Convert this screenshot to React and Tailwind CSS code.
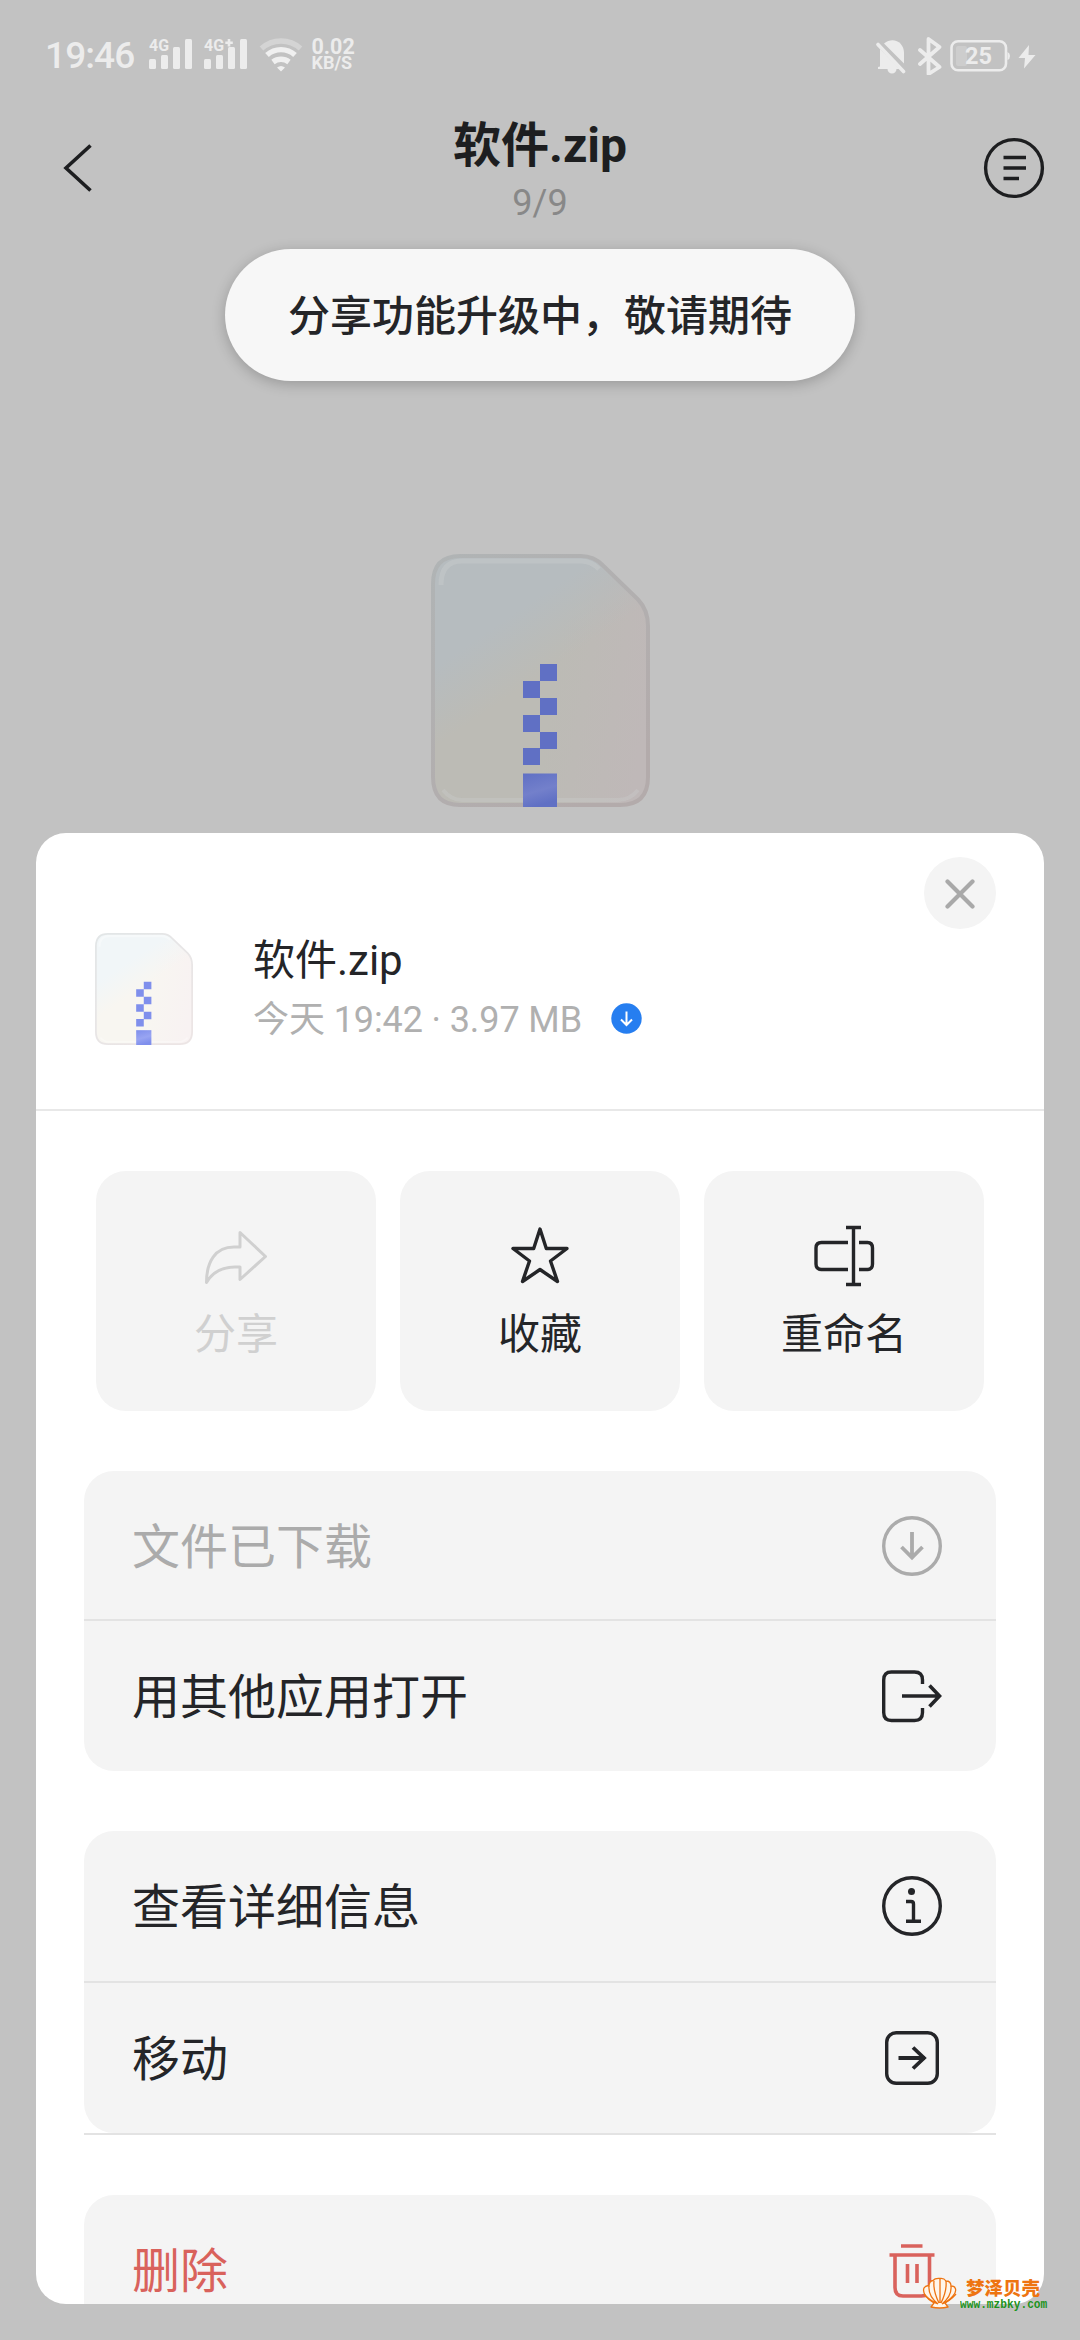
import React from 'react';
import clsx from 'clsx';

const SignalIcon = ({ label, plus }) => (
  <svg className="-mt-[10px]" width="44" height="42" viewBox="0 -10 44 42" fill="#ececec">
    <text x="0" y="13.4" fontSize="17" fontWeight="700" fontFamily="Roboto" textLength="20" lengthAdjust="spacingAndGlyphs">
      {label}
    </text>
    {plus && <path d="M25 1v7.500M21.300 4.700h7.500" stroke="#ececec" strokeWidth="2.600" />}
    <rect x="0" y="21" width="7" height="10" rx="1.5" />
    <rect x="12" y="17" width="7" height="14" rx="1.5" />
    <rect x="24" y="9" width="7" height="22" rx="1.5" />
    <rect x="36" y="1" width="7" height="30" rx="1.5" />
  </svg>
);

const WifiIcon = () => (
  <svg width="44" height="34" viewBox="0 0 44 34" fill="none" strokeWidth="5.4">
    <path d="M2.5 10.5a29 29 0 0 1 39 0" stroke="#d4d4d4" />
    <path d="M8 17a21 21 0 0 1 28 0" stroke="#f0f0f0" />
    <path d="M14 24a13 13 0 0 1 16 0" stroke="#f0f0f0" />
    <path d="M18 29.5q4-3 8 0l-4 4z" fill="#f0f0f0" />
  </svg>
);

const StatusBar = () => (
  <div className="flex h-[108px] items-start pl-[45px] pr-[44px] pt-[37px] text-[#ececec]">
    <span className="w-[104px] text-[37px] font-medium leading-[37px] tracking-[-0.9px]">19:46</span>
    <div className="flex pt-[1px]">
      <SignalIcon label="4G" />
      <div className="ml-[11px]">
        <SignalIcon label="4G" plus />
      </div>
      <div className="ml-[10.5px]">
        <WifiIcon />
      </div>
    </div>
    <div className="ml-[9px] flex flex-col pt-[1px] font-bold">
      <span className="text-[21.5px] leading-[17px]">0.02</span>
      <span className="text-[18px] leading-[16px]">KB/S</span>
    </div>
    <div className="ml-auto flex">
      <svg width="160" height="38" viewBox="876 35 160 38" fill="#ececec">
        <path d="M884 41.5C893 34 904 40 904 51v10.500z" />
        <path d="M880 47v17.500l-2 .5v2h9.500a4.500 4.500 0 0 0 9 0h3z" />
        <path d="M878 42.500 903.500 69.500" stroke="#ececec" strokeWidth="3.600" strokeLinecap="round" />
        <path d="M920 48l19.500 17-11 7V37l11 8L920 62" fill="none" stroke="#ececec" strokeWidth="3.800" strokeLinejoin="round" strokeLinecap="round" />
        <rect x="951.500" y="39.300" width="54.500" height="29" rx="6.500" fill="none" stroke="#ececec" strokeWidth="2.600" />
        <path d="M1007.500 50q2.500 1 2.500 4t-2.500 4z" />
        <rect x="956" y="44" width="11" height="20" rx="2" fill="#cdcdcd" />
        <text x="978.500" y="62" fontSize="23.500" fontWeight="700" fontFamily="Roboto" textAnchor="middle">
          25
        </text>
        <path d="M1029 43 1018.500 56h6.500l-1 10.500L1035.500 53h-7z" />
      </svg>
    </div>
  </div>
);

const Header = () => (
  <div className="flex h-[141px] items-start justify-between px-[35px] text-[#1d1e20]">
    <svg className="mt-[36px]" width="62" height="48" viewBox="-27 0 62 48" fill="none" stroke="currentColor" strokeWidth="3.6">
      <path d="M28.500 1.500 4 24l24.500 22.500" />
    </svg>
    <div className="flex flex-col items-center">
      <h1 className="mt-[10px] text-[48px] font-bold leading-[56px]">软件.zip</h1>
      <span className="mt-[8px] text-[36px] leading-[42px] text-[#888888]">9/9</span>
    </div>
    <svg className="mt-[29px]" width="62" height="62" viewBox="0 0 62 62" fill="none" stroke="currentColor" strokeWidth="3.4">
      <circle cx="31" cy="31" r="28.400" />
      <path d="M20.500 20.500H43M20.500 31H43M20.500 41.500H36" />
    </svg>
  </div>
);

const OUTLINE =
  'M29 2H150Q163 2 172 11.500L207 45.500Q217 56 217 72V223Q217 251 189 251H29Q2 251 2 223V30Q2 2 29 2z';

const ZipFile = ({ id, width, height, colors, edges, blocks, shine }) => (
  <svg width={width} height={height} viewBox="0 0 219 253" preserveAspectRatio="none">
    <defs>
      <linearGradient id={id + 'Base'} x1="0.2" y1="0.45" x2="1" y2="0.6">
        <stop offset="0" stopColor={colors[1]} />
        <stop offset="0.45" stopColor={colors[1]} />
        <stop offset="1" stopColor={colors[2]} />
      </linearGradient>
      <linearGradient id={id + 'Tint'} x1="0.15" y1="0" x2="0.5" y2="0.6">
        <stop offset="0" stopColor={colors[0]} />
        <stop offset="0.45" stopColor={colors[0]} />
        <stop offset="0.85" stopColor={colors[0]} stopOpacity="0" />
      </linearGradient>
      <linearGradient id={id + 'Edge'} x1="0" y1="0" x2="0.7" y2="1">
        <stop offset="0" stopColor={edges[0]} />
        <stop offset="1" stopColor={edges[1]} />
      </linearGradient>
      <linearGradient id={id + 'Block'} x1="0" y1="0" x2="0.3" y2="1">
        <stop offset="0" stopColor={blocks[0]} />
        <stop offset="0.6" stopColor={blocks[1]} />
        <stop offset="1" stopColor={blocks[0]} />
      </linearGradient>
    </defs>
    <path d={OUTLINE} fill={`url(#${id}Base)`} />
    <path d={OUTLINE} fill={`url(#${id}Tint)`} />
    <path d="M10 31Q10 7 31 7H150Q160 7 168 15" fill="none" stroke={shine} strokeWidth="5" opacity="0.35" />
    <path d="M12 236Q20 246 31 246H187Q199 246 207 236" fill="none" stroke={shine} strokeWidth="4" opacity="0.3" />
    <path d={OUTLINE} fill="none" stroke={`url(#${id}Edge)`} strokeWidth="4" />
    <g fill={blocks[0]}>
      <path d="M109 110h17v17h-17zM92 127h17v17H92zM109 144h17v17h-17zM92 161h17v17H92zM109 178h17v17h-17zM92 194h17v17H92z" />
      <path d="M92 219.500h34V253H92z" fill={`url(#${id}Block)`} />
    </g>
  </svg>
);

const ShareIcon = () => (
  <svg width="64" height="64" viewBox="0 0 64 64" fill="none" stroke="currentColor" strokeWidth="3" strokeLinejoin="round">
    <path d="M36 8.500 61.500 32.500 36 55.500V43H31C18 43 8 49 2.500 58.500 2.500 38 11 23 30 23h6z" />
  </svg>
);

const StarIcon = () => (
  <svg width="64" height="64" viewBox="0 0 64 64" fill="none" stroke="currentColor" strokeWidth="3.400" strokeLinejoin="round">
    <path d="M32 5 38.300 24.500H59L42.500 37 49.500 57.500 32 45.500 14.500 57.500 21.500 37 5 24.500H25.700z" />
  </svg>
);

const RenameIcon = () => (
  <svg width="64" height="64" viewBox="0 0 64 64" fill="none" stroke="currentColor" strokeWidth="3.400">
    <path d="M36 18.500H9.500Q4 18.500 4 24v16Q4 45.500 9.500 45.500H36M47 18.500h8.500Q60.500 18.500 60.500 24v16Q60.500 45.500 55.500 45.500H47" />
    <path d="M41.500 3.500v57M34 3.500h15M34 60.500h15" />
  </svg>
);

const DownloadIcon = () => (
  <svg width="60" height="60" viewBox="0 0 60 60" fill="none" stroke="currentColor" strokeWidth="3.400">
    <circle cx="30" cy="30" r="28.300" />
    <path d="M30 16v26M19.500 31 30 41.500 40.500 31" strokeWidth="3.800" />
  </svg>
);

const OpenIcon = () => (
  <svg width="60" height="60" viewBox="0 0 60 60" fill="none" stroke="currentColor" strokeWidth="3.400">
    <path d="M40.500 18V14Q40.500 6 32.500 6H9.500Q1.700 6 1.700 14V46.500Q1.700 54.500 9.500 54.500H32.500Q40.500 54.500 40.500 46.500V42" />
    <path d="M20 30H56.500M47.500 19.500 57.500 30 47.500 40.500" strokeWidth="3.600" />
  </svg>
);

const InfoIcon = () => (
  <svg width="60" height="60" viewBox="0 0 60 60" fill="none" stroke="currentColor" strokeWidth="3.400">
    <circle cx="30" cy="30" r="28.300" />
    <circle cx="29.500" cy="15.500" r="3.500" fill="currentColor" stroke="none" />
    <path d="M24 25.500h5Q31.500 25.500 31.500 28V45M24 45.300H39" />
  </svg>
);

const MoveIcon = () => (
  <svg width="60" height="60" viewBox="0 0 60 60" fill="none" stroke="currentColor" strokeWidth="3.400">
    <rect x="4.700" y="4.700" width="50.600" height="50.600" rx="9.500" />
    <path d="M16.500 30H43M31 19.500 42 30 31 40.500" strokeWidth="3.800" />
  </svg>
);

const TrashIcon = () => (
  <svg width="60" height="60" viewBox="0 0 60 60" fill="none" stroke="currentColor" strokeWidth="3.600">
    <path d="M19 6H40.500M7.500 15H52.500" />
    <path d="M13 15V47.500Q13 56 21 56H39.500Q47.500 56 47.500 47.500V15" />
    <path d="M25.500 24V43M35 24V43" />
  </svg>
);

const Tile = ({ icon: Icon, label, disabled }) => (
  <button
    className={clsx(
      'flex h-[240px] flex-1 flex-col items-center rounded-[30px] bg-[#f4f4f4] pt-[53px]',
      disabled ? 'text-[#d0d0d0]' : 'text-[#242528]'
    )}
  >
    <Icon />
    <span className="mt-[17px] text-[42px] leading-[60px]">{label}</span>
  </button>
);

const Row = ({ icon: Icon, label, className }) => (
  <button className={clsx('flex h-[150px] w-full items-center justify-between pl-[48px] pr-[54px]', className)}>
    <span className="pt-[4px] text-[48px] leading-[60px]">{label}</span>
    <Icon />
  </button>
);

const Sheet = () => (
  <div className="mx-[36px] flex h-[1471px] flex-col overflow-hidden rounded-[30px] bg-white text-[#242528]">
    <div className="flex h-[278px] shrink-0 justify-between border-b-2 border-[#e8e8e8] pl-[59px] pr-[48px]">
      <div className="flex pt-[100px]">
        <ZipFile
          id="small"
          width={98}
          height={112}
          colors={['#f1f6f8', '#f8f6f1', '#f8f2f2']}
          edges={['#e2e6e7', '#ece5e5']}
          blocks={['#7f8fec', '#98a4f2']}
          shine="#ffffff"
        />
        <div className="ml-[60px] flex flex-col">
          <span className="text-[42px] leading-[56px]">软件.zip</span>
          <div className="mt-[3px] flex items-center text-[#b0b0b0]">
            <span className="text-[36px] leading-[56px] tracking-[-0.1px]">今天 19:42 · 3.97 MB</span>
            <svg className="-mt-[3px] ml-[29px]" width="31" height="31" viewBox="0 0 31 31" fill="none">
              <circle cx="15.500" cy="15.500" r="15.200" fill="#267ef0" />
              <path d="M15.500 8.500V21.500M10 16.500l5.500 5.500 5.500-5.500" stroke="white" strokeWidth="2" />
            </svg>
          </div>
        </div>
      </div>
      <button className="mt-[24px] flex size-[72px] items-center justify-center rounded-full bg-[#f4f4f4]">
        <svg className="mt-[2px]" width="30" height="30" viewBox="0 0 30 30" stroke="#a9a9a9" strokeWidth="4.200" strokeLinecap="round">
          <path d="M2.500 2.500l25 25M27.500 2.500l-25 25" />
        </svg>
      </button>
    </div>

    <div className="flex shrink-0 gap-6 px-[60px] pt-[60px]">
      <Tile icon={ShareIcon} label="分享" disabled />
      <Tile icon={StarIcon} label="收藏" />
      <Tile icon={RenameIcon} label="重命名" />
    </div>

    <div className="mx-[48px] mt-[60px] shrink-0 overflow-hidden rounded-[30px] bg-[#f4f4f4]">
      <div className="h-[150px] border-b-2 border-[#e3e3e3] text-[#ababab]">
        <Row icon={DownloadIcon} label="文件已下载" />
      </div>
      <Row icon={OpenIcon} label="用其他应用打开" />
    </div>

    <div className="mx-[48px] mt-[60px] shrink-0 border-b-2 border-[#e3e3e3]">
      <div className="overflow-hidden rounded-[30px] bg-[#f4f4f4]">
        <Row icon={InfoIcon} label="查看详细信息" />
        <div className="h-[2px] bg-[#e3e3e3]" />
        <Row icon={MoveIcon} label="移动" />
      </div>
    </div>

    <div className="mx-[48px] mt-[60px] shrink-0 rounded-[30px] bg-[#f4f4f4]">
      <Row icon={TrashIcon} label="删除" className="text-[#d9625c]" />
    </div>
  </div>
);

const Watermark = () => (
  <div className="absolute left-[922px] top-[2277px] flex">
    <svg width="36" height="32" viewBox="0 0 36 32" fill="#fff6ea" stroke="#ee7411" strokeWidth="1.300" strokeLinejoin="round">
      <path d="M12 26C5 22 0 16 2 11Q4 8 7 9 7 4 11 3.500 13 1 18 1.500 22 1 24 4 29 4 29 9 33 9 33.500 12 35 17 23 26L26 30Q18 32 9 30z" />
      <path d="M16 27Q6 19 7 9M17 26Q11 14 12 4M18 26V2M19 26Q25 14 24 4M20 27Q30 19 29 9M16 27Q8 24 2 17M20 27Q28 24 34 17" fill="none" />
    </svg>
    <div className="ml-[2px] flex flex-col whitespace-nowrap">
      <span className="ml-[6px] mt-[3px] text-[18.5px] font-black leading-[18px] text-[#ee7411]">梦泽贝壳</span>
      <span className="mt-[1px] scale-y-120 font-['Liberation_Mono',monospace] text-[11.200px] font-bold leading-[13px] text-[#1c931c]">
        www.mzbky.com
      </span>
    </div>
  </div>
);

const App = () => {
  return (
    <div
      lang="zh-CN"
      className="relative flex h-[2340px] w-[1080px] flex-col overflow-hidden bg-[#c2c2c2] font-[Roboto,'Noto_Sans_CJK_SC',sans-serif]"
    >
      <StatusBar />
      <Header />
      <div className="mx-auto flex h-[132px] w-[630px] items-center justify-center rounded-full bg-[#f7f7f7] shadow-[0_3px_14px_rgba(0,0,0,0.22)]">
        <span className="pt-[3px] text-[42px] font-medium leading-[60px] text-[#242528]">分享功能升级中，敬请期待</span>
      </div>
      <div className="flex h-[452px] justify-center pt-[173px]">
        <ZipFile
          id="large"
          width={219}
          height={253}
          colors={['#b6bcbf', '#bcbbb5', '#bfb8b8']}
          edges={['#b0b4b5', '#b3abab']}
          blocks={['#6070c4', '#7380cb']}
          shine="#cdd0d0"
        />
      </div>
      <Sheet />
      <Watermark />
    </div>
  );
};

export default App;
